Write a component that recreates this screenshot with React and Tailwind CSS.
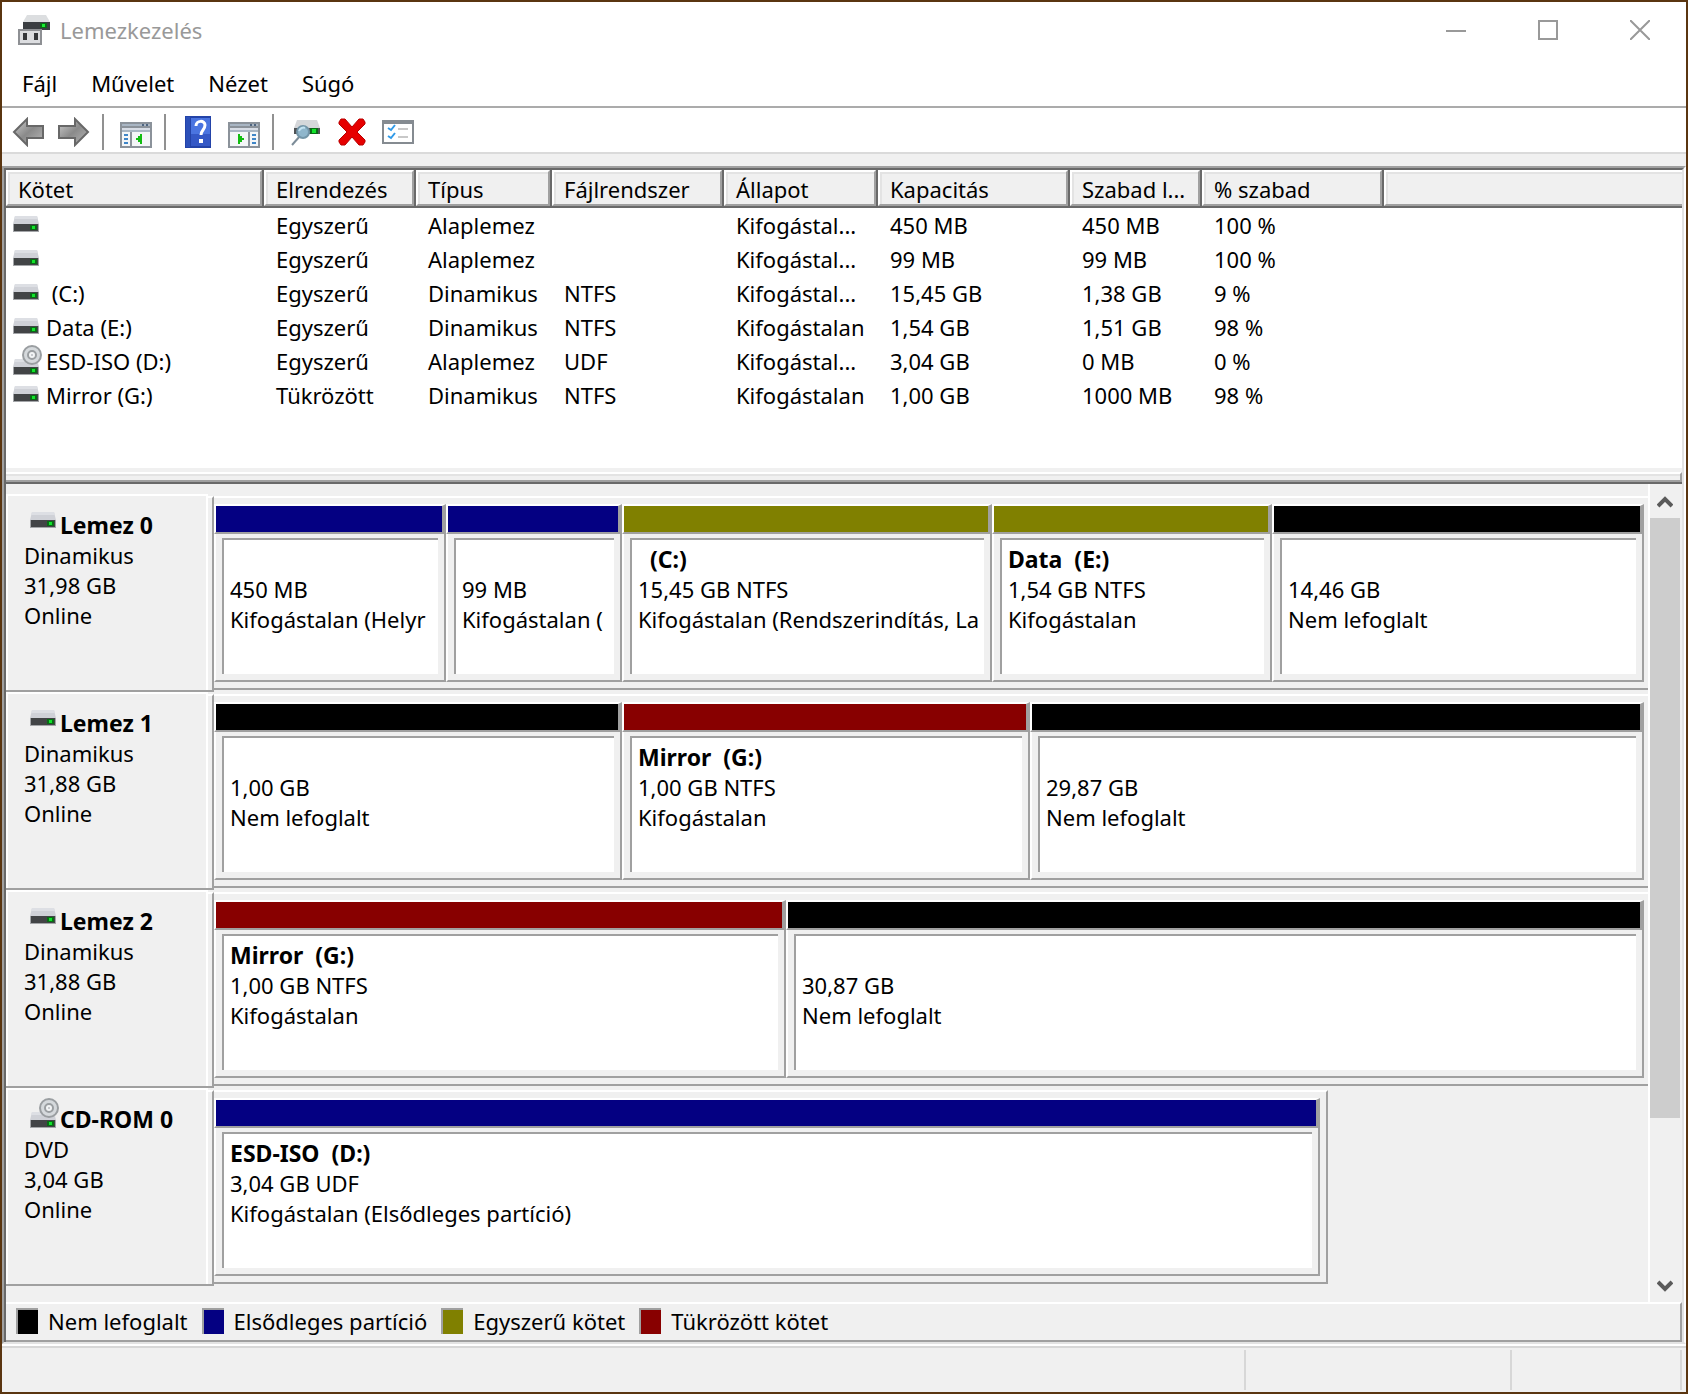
import { useState } from "react";

const MENU = ["Fájl", "Művelet", "Nézet", "Súgó"];

const COLUMNS = [
  { label: "Kötet", width: "w-[258px]" },
  { label: "Elrendezés", width: "w-[152px]" },
  { label: "Típus", width: "w-[136px]" },
  { label: "Fájlrendszer", width: "w-[172px]" },
  { label: "Állapot", width: "w-[154px]" },
  { label: "Kapacitás", width: "w-[192px]" },
  { label: "Szabad l...", width: "w-[132px]" },
  { label: "% szabad", width: "w-[182px]" },
];

const VOLUMES = [
  { name: "", cells: ["Egyszerű", "Alaplemez", "", "Kifogástal...", "450 MB", "450 MB", "100 %"] },
  { name: "", cells: ["Egyszerű", "Alaplemez", "", "Kifogástal...", "99 MB", "99 MB", "100 %"] },
  { name: " (C:)", cells: ["Egyszerű", "Dinamikus", "NTFS", "Kifogástal...", "15,45 GB", "1,38 GB", "9 %"] },
  { name: "Data (E:)", cells: ["Egyszerű", "Dinamikus", "NTFS", "Kifogástalan", "1,54 GB", "1,51 GB", "98 %"] },
  { name: "ESD-ISO (D:)", cd: true, cells: ["Egyszerű", "Alaplemez", "UDF", "Kifogástal...", "3,04 GB", "0 MB", "0 %"] },
  { name: "Mirror (G:)", cells: ["Tükrözött", "Dinamikus", "NTFS", "Kifogástalan", "1,00 GB", "1000 MB", "98 %"] },
];

const COLORS = {
  free: "bg-black",
  primary: "bg-[#040082]",
  simple: "bg-[#808000]",
  mirror: "bg-[#880000]",
};

const DISKS = [
  {
    name: "Lemez 0",
    type: "Dinamikus",
    size: "31,98 GB",
    parts: [
      { kind: "primary", grow: 232, size: "450 MB", state: "Kifogástalan (Helyr" },
      { kind: "primary", grow: 176, size: "99 MB", state: "Kifogástalan (" },
      { kind: "simple", grow: 370, name: "  (C:)", size: "15,45 GB NTFS", state: "Kifogástalan (Rendszerindítás, La" },
      { kind: "simple", grow: 280, name: "Data  (E:)", size: "1,54 GB NTFS", state: "Kifogástalan" },
      { kind: "free", grow: 372, size: "14,46 GB", state: "Nem lefoglalt" },
    ],
  },
  {
    name: "Lemez 1",
    type: "Dinamikus",
    size: "31,88 GB",
    parts: [
      { kind: "free", grow: 408, size: "1,00 GB", state: "Nem lefoglalt" },
      { kind: "mirror", grow: 408, name: "Mirror  (G:)", size: "1,00 GB NTFS", state: "Kifogástalan" },
      { kind: "free", grow: 614, size: "29,87 GB", state: "Nem lefoglalt" },
    ],
  },
  {
    name: "Lemez 2",
    type: "Dinamikus",
    size: "31,88 GB",
    parts: [
      { kind: "mirror", grow: 572, name: "Mirror  (G:)", size: "1,00 GB NTFS", state: "Kifogástalan" },
      { kind: "free", grow: 858, size: "30,87 GB", state: "Nem lefoglalt" },
    ],
  },
  {
    name: "CD-ROM 0",
    type: "DVD",
    size: "3,04 GB",
    cd: true,
    share: 77.7,
    parts: [
      { kind: "primary", grow: 1, name: "ESD-ISO  (D:)", size: "3,04 GB UDF", state: "Kifogástalan (Elsődleges partíció)" },
    ],
  },
];

const LEGEND = [
  { kind: "free", label: "Nem lefoglalt" },
  { kind: "primary", label: "Elsődleges partíció" },
  { kind: "simple", label: "Egyszerű kötet" },
  { kind: "mirror", label: "Tükrözött kötet" },
];

function DriveShape() {
  return (
    <>
      <path d="M2 0h22l2 8H0z" fill="#cfd1d7" />
      <path d="M2 0h22l1 3H1z" fill="#dddfe4" />
      <path d="M0 8h26v8H0z" fill="#a3a5a8" />
      <path d="M1 8h24v7H1z" fill="#424446" />
      <path d="M17 9h7v5h-7z" fill="#0a6a16" />
      <path d="M19 10h3v3h-3z" fill="#10e42a" />
    </>
  );
}

function DriveIcon() {
  return (
    <svg width="26" height="16" viewBox="0 0 26 16" className="shrink-0">
      <DriveShape />
    </svg>
  );
}

function CdIcon() {
  return (
    <svg width="30" height="30" viewBox="0 0 30 30" className="shrink-0">
      <g transform="translate(0 14)">
        <DriveShape />
      </g>
      <circle cx="19" cy="10" r="9" fill="#d5d9dc" stroke="#9a9ea1" strokeWidth="2" />
      <circle cx="19" cy="10" r="4" fill="#f2f4f5" stroke="#9a9ea1" strokeWidth="2" />
      <circle cx="19" cy="10" r="1" fill="#b9bdc0" />
    </svg>
  );
}

function AppIcon() {
  return (
    <svg width="32" height="30" viewBox="0 0 32 30">
      <path d="M9 0h19l4 7H5z" fill="#dcdee0" />
      <path d="M5 7h27v8H5z" fill="#3b3e42" />
      <path d="M22 8h7v5h-7z" fill="#0a6a16" />
      <path d="M24 9h3v3h-3z" fill="#16ef30" />
      <path d="M1 15h22v14H1z" fill="#dcdde0" stroke="#8e9094" strokeWidth="2" />
      <path d="M5 18h4v7H5zM16 18h4v7h-4z" fill="#35373a" />
    </svg>
  );
}

function ArrowIcon({ flip }) {
  return (
    <svg width="32" height="30" viewBox="0 0 32 30">
      <defs>
        <linearGradient id={flip ? "fwd" : "back"} x1="0" y1="0" x2="1" y2="1">
          <stop offset="0" stopColor="#d0d0d0" />
          <stop offset="0.5" stopColor="#8a8a8a" />
          <stop offset="1" stopColor="#b8b8b8" />
        </linearGradient>
      </defs>
      <path
        d={flip ? "M30 15L17 2v7H1v12h16v7z" : "M2 15L15 2v7h16v12H15v7z"}
        fill={flip ? "url(#fwd)" : "url(#back)"}
        stroke="#686868"
        strokeWidth="2"
      />
    </svg>
  );
}

// console window with a side pane; flipped for the action pane on the right
function PaneIcon({ flip }) {
  return (
    <svg width="32" height="32" viewBox="0 -6 32 32" shapeRendering="crispEdges">
      <path d="M0 0h32v26H0z" fill="#8b929a" />
      <path d="M2 2h28v2H2z" fill="#a9b6c4" />
      <path d="M22 2h2v2h-2zM26 2h2v2h-2z" fill="#4f6580" />
      <path d="M2 6h28v2H2z" fill="#d8dde6" />
      <path d="M2 8h28v2H2z" fill="#a9b6c4" />
      <g transform={flip ? "translate(32 0) scale(-1 1)" : undefined}>
        <path d="M2 10h8v14H2zM12 10h18v14H12z" fill="#f4f6f8" />
        <path d="M4 12h4v2H4zM4 16h4v2H4zM4 20h4v2H4z" fill="#3f86c8" />
        <path d="M16 16h2v-2h2v-2h2v10h-2v-2h-2v-2h-2z" fill="#12bd12" />
      </g>
    </svg>
  );
}

function HelpIcon() {
  return (
    <svg width="26" height="32" viewBox="0 0 26 32">
      <path d="M0 0h26v32H0z" fill="#2343a8" />
      <path d="M1 1h4v30H1z" fill="#2c50b8" />
      <path d="M6 2h19v28H6z" fill="#4a74e0" />
      <path d="M6 18h19v12H6z" fill="#3458c6" />
      <path d="M11 10c0-6 9-6 9-1 0 5-4 5-4 10" fill="none" stroke="#fff" strokeWidth="3" />
      <path d="M14 23h4v4h-4z" fill="#fff" />
    </svg>
  );
}

function FindIcon() {
  return (
    <svg width="32" height="28" viewBox="0 0 32 28">
      <path d="M7 2h20l3 8H4z" fill="#d5d7da" />
      <path d="M4 10h26v6H4z" fill="#505356" />
      <path d="M20 10h8v6h-8z" fill="#0a6a16" />
      <path d="M22 11h4v4h-4z" fill="#10e42a" />
      <path d="M10 18L2 27" stroke="#7c8c98" strokeWidth="2" />
      <circle cx="13" cy="14" r="6" fill="#8fb6cc" stroke="#7395a8" strokeWidth="2" />
      <path d="M9 13c1-3 4-4 6-3" fill="none" stroke="#c2e2f2" strokeWidth="2" />
    </svg>
  );
}

function DeleteIcon() {
  return (
    <svg width="28" height="28" viewBox="0 0 28 28">
      <path
        d="M3 1h4l7 8 7-8h4l2 3v2l-8 8 8 8v2l-2 3h-4l-7-8-7 8H3l-2-3v-2l8-8-8-8V4z"
        fill="#e60000"
        stroke="#b80000"
      />
    </svg>
  );
}

function TasksIcon() {
  return (
    <svg width="32" height="24" viewBox="0 0 32 24">
      <path d="M1 1h30v22H1z" fill="#fff" stroke="#858b91" strokeWidth="2" />
      <path d="M0 0h32v4H0z" fill="#858b91" />
      <path d="M6 8l3 2 4-5M6 16l3 2 4-5" fill="none" stroke="#2f9ae8" strokeWidth="2" />
      <path d="M16 8h10v2H16zM16 16h10v2H16z" fill="#c8c8c8" />
    </svg>
  );
}

function ToolButton({ label, children }) {
  return (
    <button type="button" aria-label={label} className="flex w-[46px] items-center justify-center">
      {children}
    </button>
  );
}

function ToolSeparator() {
  return <div className="mr-[9px] ml-[5px] h-9 w-[2px] self-center bg-[#919191]" />;
}

function TitleBar() {
  return (
    <header className="flex h-[60px] items-center pb-1 pl-4">
      <AppIcon />
      <h1 className="ml-[10px] flex-1 text-[#999999]">Lemezkezelés</h1>
      <button type="button" aria-label="Kis méret" className="flex h-full w-[92px] items-center justify-center">
        <svg width="20" height="20" viewBox="0 0 20 20">
          <path d="M0 10h20v2H0z" fill="#999" />
        </svg>
      </button>
      <button type="button" aria-label="Teljes méret" className="flex h-full w-[92px] items-center justify-center">
        <svg width="20" height="20" viewBox="0 0 20 20">
          <path d="M1 1h18v18H1z" fill="none" stroke="#999" strokeWidth="2" />
        </svg>
      </button>
      <button type="button" aria-label="Bezárás" className="flex h-full w-[92px] items-center justify-center">
        <svg width="20" height="20" viewBox="0 0 20 20">
          <path d="M0 0l20 20M20 0L0 20" stroke="#999" strokeWidth="2" />
        </svg>
      </button>
    </header>
  );
}

function Toolbar() {
  return (
    <div className="flex h-[46px] border-b-2 border-[#dadada] pt-1 pl-[3px]">
      <ToolButton label="Vissza">
        <ArrowIcon />
      </ToolButton>
      <ToolButton label="Előre">
        <ArrowIcon flip />
      </ToolButton>
      <ToolSeparator />
      <ToolButton label="Konzolfa">
        <PaneIcon />
      </ToolButton>
      <ToolSeparator />
      <ToolButton label="Súgó">
        <HelpIcon />
      </ToolButton>
      <ToolButton label="Műveletpanel">
        <PaneIcon flip />
      </ToolButton>
      <ToolSeparator />
      <ToolButton label="Lemezek újraellenőrzése">
        <FindIcon />
      </ToolButton>
      <ToolButton label="Törlés">
        <DeleteIcon />
      </ToolButton>
      <ToolButton label="Tulajdonságok">
        <TasksIcon />
      </ToolButton>
    </div>
  );
}

// raised grey header: light top/left edge, double dark right/bottom edge
function HeadCell({ label, width, last }) {
  return (
    <th scope="col" className={`h-[38px] p-0 text-left font-normal ${width}`}>
      <div className={`h-full border-b-2 border-[#696969] ${last ? "" : "border-r-2"}`}>
        <div
          className={`h-full border-t-2 border-b-2 border-l-2 border-t-white border-b-[#a0a0a0] border-l-white ${
            last ? "" : "border-r-2 border-r-[#a0a0a0]"
          }`}
        >
          <div className="flex h-full items-center border-t-2 border-l-2 border-[#e3e3e3] bg-[#f0f0f0] pl-2 whitespace-nowrap">
            {label}
          </div>
        </div>
      </div>
    </th>
  );
}

function VolumeTable() {
  return (
    <div className="h-[298px] bg-white">
      <table className="w-full table-fixed border-collapse">
        <thead>
          <tr>
            {COLUMNS.map((c) => (
              <HeadCell key={c.label} label={c.label} width={c.width} />
            ))}
            <HeadCell label="" width="" last />
          </tr>
        </thead>
        <tbody>
          {VOLUMES.map((v, i) => (
            <tr key={i} className="h-[34px]">
              <td className="p-0">
                <div className="flex h-[34px] items-center pl-[7px]">
                  <div className="w-[33px] pb-[2px]">{v.cd ? <CdIcon /> : <DriveIcon />}</div>
                  <span className="whitespace-pre">{v.name}</span>
                </div>
              </td>
              {v.cells.map((cell, j) => (
                <td key={j} className="p-0 pl-3 whitespace-nowrap">
                  {cell}
                </td>
              ))}
              <td />
            </tr>
          ))}
        </tbody>
      </table>
    </div>
  );
}

function Partition({ part, selected, onSelect }) {
  return (
    <button
      type="button"
      aria-pressed={selected}
      onClick={onSelect}
      className="flex min-w-0 basis-0 flex-col text-left"
      style={{ flexGrow: part.grow }}
    >
      <div className="h-[30px] w-full border-t-2 border-r-4 border-b-2 border-l-2 border-t-white border-r-[#a0a0a0] border-b-[#a0a0a0] border-l-white">
        <div className={`h-full ${COLORS[part.kind]}`} />
      </div>
      <div className="w-full flex-1 border-r-2 border-b-2 border-l-2 border-r-[#a0a0a0] border-b-[#a0a0a0] border-l-white px-[6px] pt-1 pb-[6px]">
        <div className="h-full border-t-2 border-l-2 border-[#a0a0a0] bg-white pt-1 pl-[6px]">
          <div className="overflow-hidden leading-[30px] whitespace-pre">
            <p className="h-[30px] text-[23px] font-bold">{part.name}</p>
            <p>{part.size}</p>
            <p>{part.state}</p>
          </div>
        </div>
      </div>
    </button>
  );
}

function DiskRow({ disk, selected, onSelect }) {
  return (
    <section className="flex h-[198px]">
      <div className="flex w-[208px] shrink-0 border-b-2 border-[#a0a0a0]">
        <div className="flex-1 border-t-2 border-r-2 border-l-2 border-white pt-[14px] pl-4 leading-[30px]">
          <div className="flex h-[30px] pl-[6px]">
            <div className={disk.cd ? "-mt-[6px] w-[30px]" : "mt-[2px] w-[30px]"}>
              {disk.cd ? <CdIcon /> : <DriveIcon />}
            </div>
            <h2 className="text-[23px] font-bold whitespace-nowrap">{disk.name}</h2>
          </div>
          <p>{disk.type}</p>
          <p>{disk.size}</p>
          <p>Online</p>
        </div>
        <div className="mt-[2px] w-[6px] border-t-2 border-r-2 border-t-white border-r-[#a0a0a0]" />
      </div>
      <div className="min-w-0 flex-1 pt-[2px] pb-[2px]">
        <div
          className={`flex h-full border-t-2 border-b-2 border-t-white border-b-[#a0a0a0] pt-[6px] pb-[6px] ${
            disk.share ? "border-r-2 border-r-[#a0a0a0] pr-[6px]" : "pr-1"
          }`}
          style={{ width: `${disk.share ?? 100}%` }}
        >
          {disk.parts.map((p, i) => {
            const id = `${disk.name}-${i}`;
            return <Partition key={id} part={p} selected={selected === id} onSelect={() => onSelect(id)} />;
          })}
        </div>
      </div>
    </section>
  );
}

function ScrollBar() {
  return (
    <div className="flex w-[34px] shrink-0 flex-col border-r-2 border-l-2 border-r-[#f0f0f0] border-l-white bg-[#f0f0f0]">
      <button type="button" aria-label="Fel" className="flex h-[34px] items-center justify-center">
        <svg width="16" height="14" viewBox="0 0 16 14">
          <path d="M1 12l7-7 7 7" fill="none" stroke="#5a5a5a" strokeWidth="4" />
        </svg>
      </button>
      <div className="grow-4 basis-0 bg-[#cdcdcd]" />
      <div className="grow basis-0" />
      <button type="button" aria-label="Le" className="flex h-[34px] items-center justify-center">
        <svg width="16" height="14" viewBox="0 0 16 14">
          <path d="M1 4l7 7 7-7" fill="none" stroke="#5a5a5a" strokeWidth="4" />
        </svg>
      </button>
    </div>
  );
}

function Legend() {
  return (
    <ul className="flex h-10 items-center gap-[14px] border-t-2 border-r-2 border-b-2 border-t-white border-r-[#a0a0a0] border-b-[#a0a0a0] pb-[2px] pl-[10px]">
      {LEGEND.map((l) => (
        <li key={l.kind} className="flex items-center gap-[10px] whitespace-nowrap">
          <span className={`h-[26px] w-[22px] border-t-2 border-l-2 border-[#a0a0a0] ${COLORS[l.kind]}`} />
          {l.label}
        </li>
      ))}
    </ul>
  );
}

export default function App() {
  const [selected, setSelected] = useState(null);

  return (
    <div className="flex min-h-screen flex-col border-2 border-[#5a3510] bg-white font-['Noto_Sans','Open_Sans',sans-serif] text-[22px] leading-[30px] text-black">
      <TitleBar />
      <nav className="flex h-[46px] items-center gap-[34px] border-b-2 border-[#ababab] pb-[2px] pl-5">
        {MENU.map((m) => (
          <button key={m} type="button">
            {m}
          </button>
        ))}
      </nav>
      <Toolbar />
      <main className="flex flex-1 flex-col bg-[#f0f0f0] pt-3">
        {/* sunken client frame */}
        <div className="flex flex-1 flex-col border-2 border-t-[#a0a0a0] border-r-white border-b-[#e3e3e3] border-l-[#a0a0a0]">
          <div className="flex flex-1 flex-col border-t-2 border-r-2 border-l-2 border-t-[#696969] border-r-[#e3e3e3] border-l-[#696969]">
            <VolumeTable />
            <div className="h-4 border-b-2 border-[#696969] pt-1">
              <div className="h-[10px] border-t-2 border-r-2 border-b-2 border-t-white border-r-[#a0a0a0] border-b-[#a0a0a0]">
                <div className="h-[2px] bg-[#e3e3e3]" />
              </div>
            </div>
            <div className="flex flex-1">
              <div className="min-w-0 flex-1 pt-[10px] pb-4">
                {DISKS.map((d) => (
                  <DiskRow key={d.name} disk={d} selected={selected} onSelect={setSelected} />
                ))}
              </div>
              <ScrollBar />
            </div>
            <Legend />
          </div>
        </div>
      </main>
      <footer className="flex h-12 border-t-2 border-white bg-[#f0f0f0]">
        <div className="flex flex-1 border-t-2 border-[#d7d7d7] py-[2px] pr-1">
          <div className="flex-1 border-r-2 border-[#d7d7d7]" />
          <div className="w-[266px] border-r-2 border-[#d7d7d7]" />
          <div className="w-[170px] border-r-2 border-[#d7d7d7]" />
        </div>
      </footer>
    </div>
  );
}
